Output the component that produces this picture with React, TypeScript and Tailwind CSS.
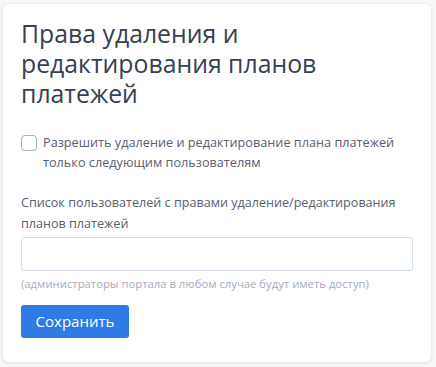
export default function App() {
  return (
    <div className="min-h-[367px] w-[436px] bg-[#f7f8fa] pt-[4px] pl-[3px]" style={{ fontFamily: '"Open Sans", "Noto Sans", sans-serif' }}>
      <div className="w-[428px] h-[358px] bg-white rounded-[6px] shadow-[0_1px_4px_rgba(0,0,0,0.12)] px-[18px] pt-[14px]">
        <h1 className="text-[24.8px] leading-[30px] text-[#364152] font-normal">
          Права удаления и редактирования планов платежей
        </h1>
        <div className="mt-[24px] flex items-start gap-[6px]">
          <div className="mt-[3px] w-[16px] h-[16px] shrink-0 rounded-[4px] border border-[#a3adbd] bg-white" />
          <div className="text-[12.7px] leading-[20px] text-[#58606e]">
            Разрешить удаление и редактирование плана платежей только следующим пользователям
          </div>
        </div>
        <div className="mt-[20px] text-[12.6px] leading-[21px] text-[#58606e]">
          Список пользователей с правами удаление/редактирования планов платежей
        </div>
        <div className="mt-[3px] w-[392px] h-[34px] border border-[#d3dcea] rounded-[3px]" />
        <div className="mt-[5px] text-[11.3px] leading-[16px] text-[#a5adbb]">
          (администраторы портала в любом случае будут иметь доступ)
        </div>
        <button className="mt-[13px] h-[33px] w-[108px] rounded-[3px] bg-[#2e7be6] text-white text-[15px]">
          Сохранить
        </button>
      </div>
    </div>
  );
}
